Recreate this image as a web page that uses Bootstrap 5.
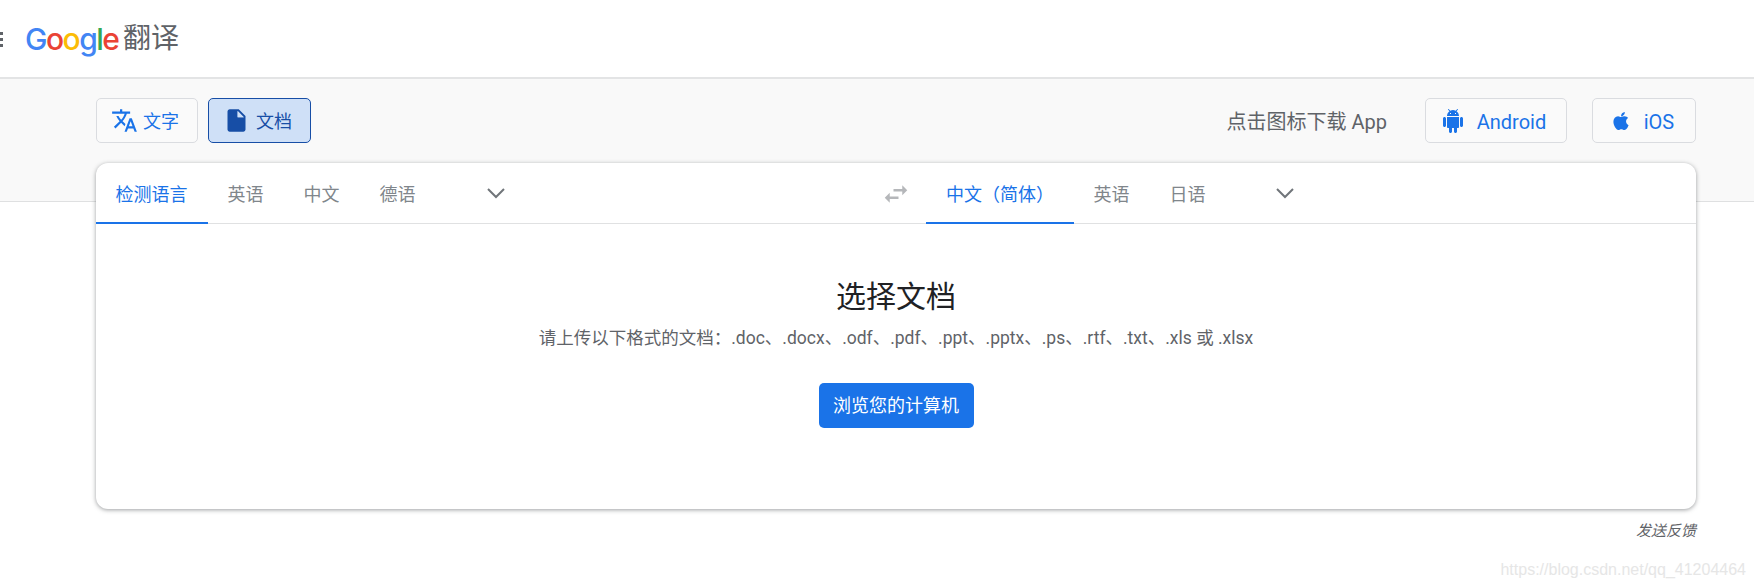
<!doctype html>
<html lang="zh-CN">
<head>
<meta charset="utf-8">
<title>Google 翻译</title>
<link href="https://cdn.jsdelivr.net/npm/bootstrap@5.3.0/dist/css/bootstrap.min.css" rel="stylesheet">
<style>
html,body{height:100%;overflow:hidden}
body{position:relative;background:#fff;color:#5f6368;font-family:Roboto,"Noto Sans CJK SC",sans-serif;font-size:18px}
.gt-head{height:79px;border-bottom:2px solid #e3e4e5;padding-left:0}
.gt-dots{width:3px;height:16px;margin-right:23px;fill:#5f6368}
.gt-logo{font-family:Inter,Roboto,sans-serif;font-weight:500;font-size:30px;letter-spacing:-1.5px;line-height:1;width:98px;margin-left:-1px}
.gt-blue{color:#4285f4}.gt-red{color:#ea4335}.gt-yel{color:#fbbc05}.gt-grn{color:#34a853}
.gt-name{font-size:28px;line-height:1;color:#5f6368}
.gt-band{height:123px;background:#f9f9f9;border-bottom:1px solid #dfe0e1;padding:19px 58px 0 96px;align-items:flex-start}
.gt-btn{height:45px;border:1px solid #dadce0;border-radius:5px;color:#1a73e8;background:#fafafa;font-size:18px;line-height:1;padding:0;display:flex;align-items:center;justify-content:center;text-decoration:none}
.gt-b1{width:102px;gap:5px;padding-right:4px}
.gt-b2{width:103px;gap:6px;padding-right:4px;margin-left:10px;background:#cfe0f7;border-color:#174ea6;color:#174ea6}
.gt-b3{width:142px;gap:12px;font-size:20px;padding-right:5px}
.gt-b4{width:104px;gap:11px;font-size:20px;margin-left:25px;padding-right:5px}
.gt-b1 svg,.gt-b2 svg{width:27px;height:27px}
.gt-b3 svg{width:24px;height:24px}
.gt-b4 svg{width:24px;height:24px}
.gt-btn span{position:relative;top:1px}
.gt-dl{font-size:20px;margin-right:38px;color:#5f6368;line-height:45px;padding-top:2px}
.gt-card{width:1600px;height:346px;margin:-39px 0 0 96px;background:#fff;border-radius:12px;box-shadow:0 1px 4px rgba(60,64,67,.5);position:relative}
.gt-tabs{height:61px;border-bottom:1px solid #e0e1e2}
.gt-side{height:61px}
.gt-left{width:788px}
.gt-tab{height:61px;padding:4px 20px 0;color:#80868b;display:flex;align-items:center;border-bottom:2px solid transparent;white-space:nowrap}
.gt-left .gt-on{padding-left:19.5px}
.gt-right .gt-on{padding-right:19.5px}
.gt-on{color:#1a73e8;border-bottom-color:#1a73e8}
.gt-swap{width:30px;height:30px;margin:0 15px 0 -3px;fill:#b5b7ba;display:block}
.gt-left .gt-chev{margin-left:51px}
.gt-right .gt-chev{margin-left:50px}
.gt-chev{width:18px;height:11px;fill:none;stroke:#70757a;stroke-width:2}
.gt-body{padding-top:55px}
.gt-title{font-size:30px;line-height:36px;color:#202124;font-weight:400;margin:0}
.gt-sub{font-size:17.5px;line-height:24px;margin:11px 0 0;color:#5f6368}
.gt-pick{width:155px;height:45px;margin-top:33px;background:#1a73e8;color:#fff;border:0;border-radius:5px;font-size:18px;line-height:1;padding:0}
.gt-fb{width:1600px;margin:12px 0 0 96px;text-align:right;font-size:15px;line-height:20px;font-style:italic;color:#5f6368}
.gt-mark{position:absolute;right:8px;bottom:8px;font-family:"Liberation Sans",sans-serif;font-size:16px;line-height:20px;color:#e6e6e6}
</style>
</head>
<body>
<header class="gt-head d-flex align-items-center">
  <svg class="gt-dots" viewBox="0 0 3 16"><rect y="1" width="3" height="3"/><rect y="7" width="3" height="3"/><rect y="13" width="3" height="3"/></svg>
  <span class="gt-logo"><span class="gt-blue">G</span><span class="gt-red">o</span><span class="gt-yel">o</span><span class="gt-blue">g</span><span class="gt-grn">l</span><span class="gt-red">e</span></span>
  <span class="gt-name">翻译</span>
</header>
<section class="gt-band d-flex">
  <a class="gt-btn gt-b1" href="#"><svg viewBox="0 0 24 24" fill="currentColor"><path d="M12.87 15.07l-2.54-2.51.03-.03c1.74-1.94 2.98-4.17 3.71-6.53H17V4h-7V2H8v2H1v1.99h11.17C11.5 7.92 10.44 9.75 9 11.35 8.07 10.32 7.3 9.19 6.69 8h-2c.73 1.63 1.73 3.17 2.98 4.56l-5.09 5.02L4 19l5-5 3.11 3.11.76-2.04zM18.5 10h-2L12 22h2l1.12-3h4.75L21 22h2l-4.5-12zm-2.62 7l1.62-4.33L19.12 17h-3.24z"/></svg><span>文字</span></a>
  <a class="gt-btn gt-b2" href="#"><svg viewBox="0 0 24 24" fill="currentColor"><path d="M14 2H6c-1.1 0-2 .9-2 2v16c0 1.1.9 2 2 2h12c1.1 0 2-.9 2-2V8l-6-6zm-1 7V3.5L18.5 9H13z"/><path d="M13 9V3.5L18.5 9z" fill="#cfe0f7"/></svg><span>文档</span></a>
  <span class="ms-auto gt-dl">点击图标下载 App</span>
  <a class="gt-btn gt-b3" href="#"><svg viewBox="0 0 24 24" fill="currentColor"><path d="M6 18c0 .55.45 1 1 1h1v3.5c0 .83.67 1.5 1.5 1.5s1.5-.67 1.5-1.5V19h2v3.5c0 .83.67 1.5 1.5 1.5s1.5-.67 1.5-1.5V19h1c.55 0 1-.45 1-1V8H6v10zM3.5 8C2.67 8 2 8.67 2 9.5v7c0 .83.67 1.5 1.5 1.5S5 17.33 5 16.5v-7C5 8.67 4.33 8 3.5 8zm17 0c-.83 0-1.5.67-1.5 1.5v7c0 .83.67 1.5 1.5 1.5s1.5-.67 1.5-1.5v-7c0-.83-.67-1.5-1.5-1.5zm-4.97-5.84l1.3-1.3c.2-.2.2-.51 0-.71-.2-.2-.51-.2-.71 0l-1.48 1.48C13.85 1.23 12.95 1 12 1c-.96 0-1.86.23-2.66.63L7.85.15c-.2-.2-.51-.2-.71 0-.2.2-.2.51 0 .71l1.31 1.31C6.97 3.26 6 5.01 6 7h12c0-1.99-.97-3.75-2.47-4.84zM10 5H9V4h1v1zm5 0h-1V4h1v1z"/></svg><span>Android</span></a>
  <a class="gt-btn gt-b4" href="#"><svg viewBox="0 0 24 24" fill="currentColor"><path d="M17.05 20.28c-.98.95-2.05.8-3.08.35-1.09-.46-2.09-.48-3.24 0-1.44.62-2.2.44-3.06-.35C2.79 15.25 3.51 7.59 9.05 7.31c1.35.07 2.29.74 3.08.8 1.18-.24 2.31-.93 3.57-.84 1.51.12 2.65.72 3.4 1.8-3.12 1.87-2.38 5.98.48 7.13-.57 1.5-1.31 2.99-2.54 4.09zM12.03 7.25c-.15-2.23 1.66-4.07 3.74-4.25.29 2.58-2.34 4.5-3.74 4.25z"/></svg><span>iOS</span></a>
</section>
<main class="gt-card">
  <div class="gt-tabs d-flex">
    <div class="gt-side gt-left d-flex align-items-center">
      <span class="gt-tab gt-on">检测语言</span><span class="gt-tab">英语</span><span class="gt-tab">中文</span><span class="gt-tab">德语</span>
      <svg class="gt-chev" viewBox="0 0 18 11"><path d="M1 1l8 8 8-8"/></svg>
    </div>
    <div class="gt-side gt-right d-flex align-items-center">
      <svg class="gt-swap" viewBox="0 0 24 24"><path d="M6.99 11L3 15l3.99 4v-3H14v-2H6.99v-3zM21 9l-3.99-4v3H10v2h7.01v3L21 9z"/></svg>
      <span class="gt-tab gt-on">中文（简体）</span><span class="gt-tab">英语</span><span class="gt-tab">日语</span>
      <svg class="gt-chev" viewBox="0 0 18 11"><path d="M1 1l8 8 8-8"/></svg>
    </div>
  </div>
  <div class="gt-body text-center">
    <h1 class="gt-title">选择文档</h1>
    <p class="gt-sub">请上传以下格式的文档：.doc、.docx、.odf、.pdf、.ppt、.pptx、.ps、.rtf、.txt、.xls 或 .xlsx</p>
    <button class="btn gt-pick" type="button">浏览您的计算机</button>
  </div>
</main>
<div class="gt-fb">发送反馈</div>
<div class="gt-mark">https://blog.csdn.net/qq_41204464</div>
</body>
</html>
